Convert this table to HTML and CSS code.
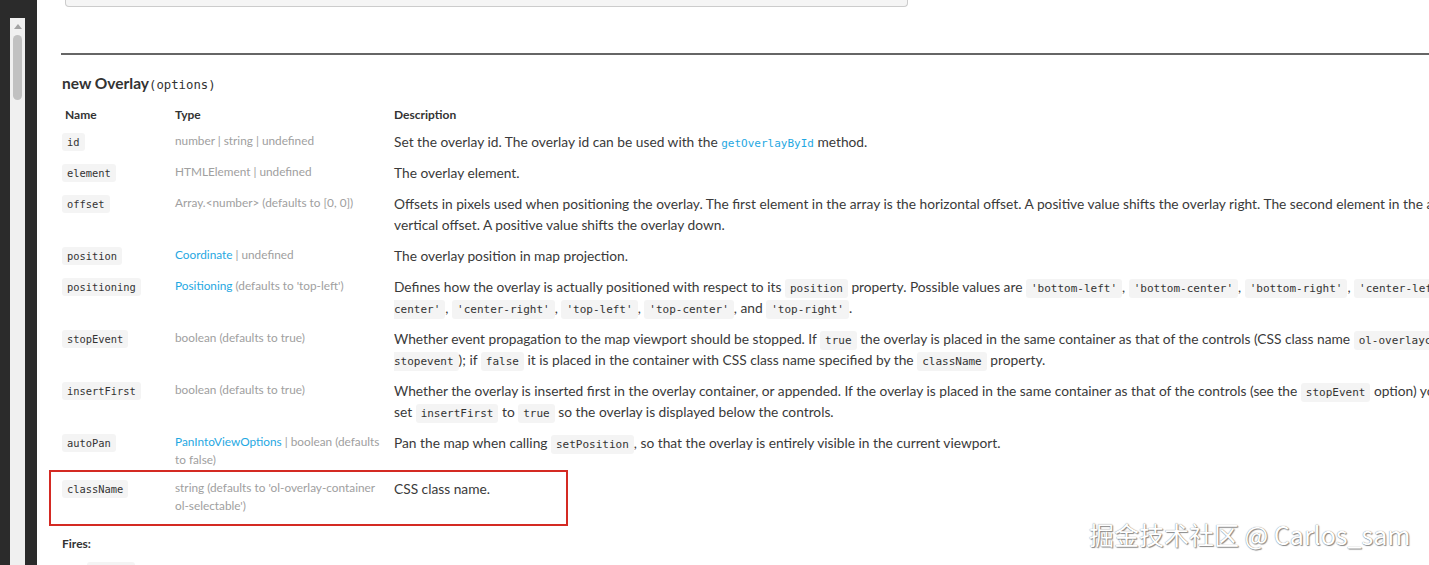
FILE: index.html
```html
<!DOCTYPE html>
<html>
<head>
<meta charset="utf-8">
<link rel="stylesheet" href="styles.css">
</head>
<body>
<div class="frame">
  <div class="scroll-track">
    <div class="scroll-arrow"></div>
    <div class="scroll-thumb"></div>
  </div>
</div>
<main class="main">
  <div class="prev-box"></div>
  <hr class="rule">
  <h4 class="title">new Overlay<span class="signature">(options)</span></h4>
  <table class="params">
    <thead>
      <tr><th class="col-name">Name</th><th class="col-type">Type</th><th class="col-desc">Description</th></tr>
    </thead>
    <tbody>
      <tr>
        <td class="name"><code>id</code></td>
        <td class="type">number | string | undefined</td>
        <td class="desc">Set the overlay id. The overlay id can be used with the <a class="code-link">getOverlayById</a> method.</td>
      </tr>
      <tr>
        <td class="name"><code>element</code></td>
        <td class="type">HTMLElement | undefined</td>
        <td class="desc">The overlay element.</td>
      </tr>
      <tr>
        <td class="name"><code>offset</code></td>
        <td class="type">Array.&lt;number&gt; (defaults to [0, 0])</td>
        <td class="desc">Offsets in pixels used when positioning the overlay. The first element in the array is the horizontal offset. A positive value shifts the overlay right. The second element in the array is the<br>vertical offset. A positive value shifts the overlay down.</td>
      </tr>
      <tr>
        <td class="name"><code>position</code></td>
        <td class="type"><a class="link">Coordinate</a> | undefined</td>
        <td class="desc">The overlay position in map projection.</td>
      </tr>
      <tr>
        <td class="name"><code>positioning</code></td>
        <td class="type"><a class="link">Positioning</a> (defaults to 'top-left')</td>
        <td class="desc">Defines how the overlay is actually positioned with respect to its <code>position</code> property. Possible values are <code>'bottom-left'</code>, <code>'bottom-center'</code>, <code>'bottom-right'</code>, <code>'center-left'</code>, <code>'center-<br>center'</code>, <code>'center-right'</code>, <code>'top-left'</code>, <code>'top-center'</code>, and <code>'top-right'</code>.</td>
      </tr>
      <tr>
        <td class="name"><code>stopEvent</code></td>
        <td class="type">boolean (defaults to true)</td>
        <td class="desc">Whether event propagation to the map viewport should be stopped. If <code>true</code> the overlay is placed in the same container as that of the controls (CSS class name <code>ol-overlaycontainer-<br>stopevent</code>); if <code>false</code> it is placed in the container with CSS class name specified by the <code>className</code> property.</td>
      </tr>
      <tr>
        <td class="name"><code>insertFirst</code></td>
        <td class="type">boolean (defaults to true)</td>
        <td class="desc">Whether the overlay is inserted first in the overlay container, or appended. If the overlay is placed in the same container as that of the controls (see the <code>stopEvent</code> option) you will probably want to<br>set <code>insertFirst</code> to <code>true</code> so the overlay is displayed below the controls.</td>
      </tr>
      <tr>
        <td class="name"><code>autoPan</code></td>
        <td class="type"><a class="link">PanIntoViewOptions</a> | boolean (defaults to false)</td>
        <td class="desc">Pan the map when calling <code>setPosition</code>, so that the overlay is entirely visible in the current viewport.</td>
      </tr>
      <tr>
        <td class="name"><code>className</code></td>
        <td class="type">string (defaults to 'ol-overlay-container ol-selectable')</td>
        <td class="desc">CSS class name.</td>
      </tr>
    </tbody>
  </table>
  <h5 class="fires">Fires:</h5>
  <ul class="fires-list">
    <li><code>change</code> (<a class="link">BaseEvent</a>)</li>
  </ul>
  <div class="highlight"></div>
  <div class="watermark">掘金技术社区 @ Carlos_sam</div>
</main>
</body>
</html>
```

FILE: styles.css
```css
html, body {
  margin: 0;
  padding: 0;
  height: 565px;
  overflow: hidden;
  background: #ffffff;
}

body {
  display: flex;
  font-family: Lato, "Noto Sans", sans-serif;
  color: #333333;
}

.frame {
  width: 37px;
  flex: none;
  background: #2b2b2b;
  display: flex;
  padding-left: 10px;
  box-sizing: border-box;
}

.scroll-track {
  width: 15px;
  margin-top: 18px;
  background: #f0f0f0;
  display: flex;
  flex-direction: column;
  align-items: center;
}

.scroll-arrow {
  margin-top: 6px;
  width: 0;
  height: 0;
  border-left: 4px solid transparent;
  border-right: 4px solid transparent;
  border-bottom: 5px solid #a3a3a3;
}

.scroll-thumb {
  margin-top: 6px;
  width: 9px;
  height: 65px;
  border-radius: 5px;
  background: #c1c1c1;
}

.main {
  position: relative;
  flex: 1;
  min-width: 0;
  padding-left: 24px;
  overflow: hidden;
}

.prev-box {
  margin-left: 4px;
  width: 841px;
  height: 6px;
  border: 1px solid #cccccc;
  border-top: 0;
  border-radius: 0 0 4px 4px;
  background: #f5f5f5;
}

.rule {
  margin: 46px 0 0 0;
  border: 0;
  border-top: 2px solid #666666;
  height: 0;
}

.title {
  margin: 18px 0 0 1px;
  font-size: 15.5px;
  font-weight: 700;
  line-height: 20px;
  color: #333333;
}

.signature {
  font-family: "DejaVu Sans Mono", monospace;
  font-weight: 400;
  font-size: 12.3px;
}

.params {
  margin-top: 6px;
  border-collapse: collapse;
  table-layout: fixed;
  width: 1800px;
}

.params th,
.params td {
  padding: 5px 4px;
  text-align: left;
  vertical-align: top;
}

.params th {
  padding-top: 3px;
  padding-bottom: 1px;
  font-size: 12px;
  font-weight: 700;
  line-height: 21px;
  color: #333333;
}

.col-name { width: 102px; }
.col-type { width: 211px; }

.params td.name {
  font-size: 12px;
  line-height: 21px;
}

.params td.type {
  padding-top: 6px;
  padding-bottom: 4px;
  font-size: 11.8px;
  line-height: 18px;
  color: #a0a0a0;
}

.params td.desc {
  font-size: 13.75px;
  line-height: 21px;
  color: #3a3a3a;
}

code {
  font-family: "DejaVu Sans Mono", monospace;
  background: #f4f4f4;
  color: #333333;
  border-radius: 3px;
  padding: 3px 5px;
  line-height: 1;
}

.name code {
  font-size: 10.4px;
  margin-left: -3px;
}

.desc code {
  font-size: 11px;
}

.link {
  color: #1fa8e2;
}

.code-link {
  font-family: "DejaVu Sans Mono", monospace;
  font-size: 11px;
  line-height: 1;
  color: #1fa8e2;
}

.fires {
  margin: 17px 0 0 1px;
  font-size: 12px;
  font-weight: 700;
  line-height: 16px;
  color: #333333;
}

.fires-list {
  margin: 9px 0 0 0;
  padding-left: 26px;
  list-style: none;
  font-size: 12px;
  color: #a0a0a0;
  line-height: 20px;
}

.fires-list code {
  font-size: 10.4px;
}

.highlight {
  position: absolute;
  left: 12px;
  top: 470px;
  width: 515px;
  height: 52px;
  border: 2px solid #d42a23;
}

.watermark {
  position: absolute;
  left: 1052px;
  top: 517px;
  font-family: "Noto Sans CJK SC", sans-serif;
  font-size: 25px;
  line-height: 34px;
  color: #ffffff;
  text-shadow: 0 0 1px #6f6f6f, 1px 1px 1px #8a8a8a;
  white-space: nowrap;
}
```
